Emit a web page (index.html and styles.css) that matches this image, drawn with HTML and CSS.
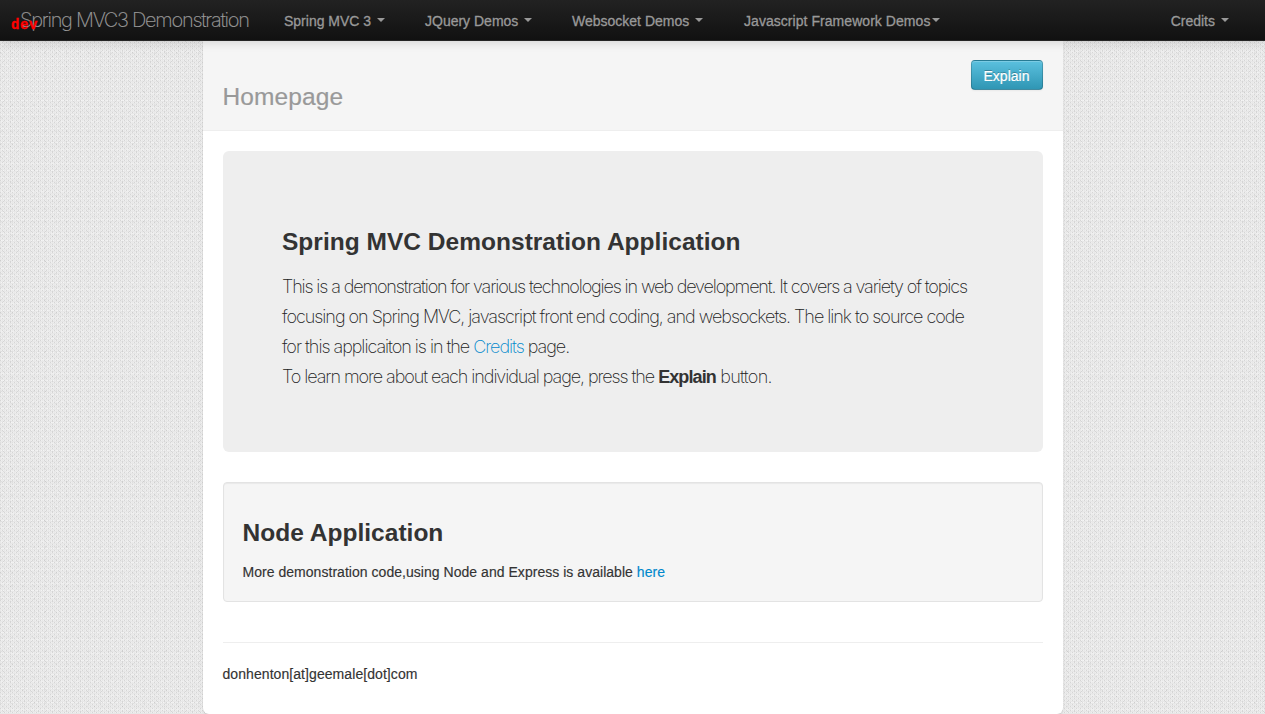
FILE: index.html
```html
<!DOCTYPE html>
<html lang="en">
<head>
<meta charset="utf-8">
<title>Spring MVC3 Demonstration</title>
<link rel="stylesheet" href="styles.css">
</head>
<body>
<nav class="navbar">
  <a class="brand">Spring MVC3 Demonstration<span class="env">dev</span></a>
  <ul class="nav">
    <li class="item item-spring"><span class="label">Spring MVC 3</span><b class="caret"></b></li>
    <li class="item item-jquery"><span class="label">JQuery Demos</span><b class="caret"></b></li>
    <li class="item item-socket"><span class="label">Websocket Demos</span><b class="caret"></b></li>
    <li class="item item-frame"><span class="label">Javascript Framework Demos</span><b class="caret"></b></li>
  </ul>
  <div class="item item-credits"><span class="label">Credits</span><b class="caret"></b></div>
</nav>
<main class="content">
  <header class="page-header">
    <h1 class="page-title">Homepage</h1>
    <button class="btn">Explain</button>
  </header>
  <section class="hero">
    <h2 class="heading">Spring MVC Demonstration Application</h2>
    <p class="lead">
      <span class="l1">This is a demonstration for various technologies in web development. It covers a variety of topics</span><br>
      <span class="l2">focusing on Spring MVC, javascript front end coding, and websockets. The link to source code</span><br>
      <span class="l3">for this applicaiton is in the <a class="link">Credits</a> page.</span><br>
      <span class="l4">To learn more about each individual page, press the <strong>Explain</strong></span><span class="l5"> button.</span>
    </p>
  </section>
  <section class="well">
    <h2 class="heading">Node Application</h2>
    <p class="text">More demonstration code,using Node and Express is available <a class="link">here</a></p>
  </section>
  <hr class="rule">
  <footer class="footer">donhenton[at]geemale[dot]com</footer>
</main>
</body>
</html>
```
FILE: styles.css
```css
* { box-sizing: border-box; }
html, body { height: 100%; }
body {
  margin: 0;
  overflow: hidden;
  font: 14px/20px "Liberation Sans", Arial, sans-serif;
  color: #333;
  background-color: #e7e7e7;
  background-image:
    conic-gradient(from 0deg at 1px 1px, transparent 270deg, rgba(0,0,0,.08) 0),
    conic-gradient(from 0deg at 1px 1px, transparent 270deg, rgba(0,0,0,.08) 0),
    conic-gradient(from 0deg at 1px 1px, transparent 270deg, rgba(255,255,255,.35) 0),
    conic-gradient(from 0deg at 1px 1px, transparent 270deg, rgba(0,0,0,.08) 0),
    conic-gradient(from 0deg at 3px 1px, transparent 270deg, rgba(255,255,255,.35) 0),
    conic-gradient(from 0deg at 2px 2px, transparent 270deg, rgba(0,0,0,.04) 0);
  background-size: 4px 4px, 4px 4px, 2px 2px, 7px 5px, 5px 7px, 11px 13px;
  background-position: 0 0, 2px 2px, 1px 0, 3px 1px, 1px 2px, 0 0;
}
.navbar {
  position: relative;
  z-index: 2;
  display: flex;
  height: 41px;
  padding: 0 36px 0 20px;
  color: #999;
  background: linear-gradient(#222, #111);
  border-bottom: 1px solid #252525;
  box-shadow: 0 1px 10px rgba(0,0,0,.15);
}
.brand {
  position: relative;
  width: 264px;
  font: 200 20px/40px Inter, sans-serif;
  letter-spacing: -1.27px;
  white-space: nowrap;
  -webkit-text-stroke: 0.15px #999;
}
.env {
  position: absolute;
  left: -9px;
  top: 16px;
  font: bold 14px/18px "Liberation Mono", monospace;
  letter-spacing: 0.6px;
  color: red;
  -webkit-text-stroke: 0.3px red;
}
.nav { display: flex; flex: 1; margin: 0; padding: 0; list-style: none; }
.item { display: flex; line-height: 42px; white-space: nowrap; -webkit-text-stroke: 0.3px #999; }
.item-spring { width: 141px; }
.item-jquery { width: 147px; }
.item-socket { width: 172px; }
.item-frame .label { letter-spacing: 0.05px; }
.caret {
  width: 0;
  height: 0;
  margin: 18px 0 0 6px;
  border-top: 4px solid #999;
  border-left: 4px solid transparent;
  border-right: 4px solid transparent;
}
.item-frame .caret { margin-left: 2px; }
.content {
  width: 860px;
  height: 673px;
  margin: 0 auto;
  padding: 0 20px;
  background: #fff;
  border-radius: 0 0 6px 6px;
  box-shadow: 0 1px 2px rgba(0,0,0,.15);
}
.page-header {
  display: flex;
  justify-content: space-between;
  height: 90px;
  margin: 0 -20px 20px;
  padding: 19px 20px;
  background: #f5f5f5;
  border-bottom: 1px solid #eee;
}
.page-title {
  margin: 17px 0 0;
  font-size: 24.5px;
  line-height: 40px;
  font-weight: normal;
  letter-spacing: 0.1px;
  color: #999;
  -webkit-text-stroke: 0.2px #999;
}
.btn {
  width: 72px;
  height: 30px;
  padding: 1px 0 0;
  font: 14px/20px "Liberation Sans", Arial, sans-serif;
  color: #fff;
  -webkit-text-stroke: 0.2px #fff;
  text-shadow: 0 -1px 0 rgba(0,0,0,.25);
  background: linear-gradient(#5bc0de, #2f96b4);
  border: 1px solid rgba(0,0,0,.18);
  border-bottom-color: rgba(0,0,0,.28);
  border-radius: 4px;
  box-shadow: inset 0 1px 0 rgba(255,255,255,.2), 0 1px 2px rgba(0,0,0,.05);
}
.hero {
  height: 301px;
  margin-bottom: 30px;
  padding: 71px 60px 0 59.5px;
  background: #eee;
  border-radius: 6px;
}
.heading { margin: 0; font-size: 24.5px; line-height: 40px; font-weight: bold; letter-spacing: 0.02px; color: #333; white-space: nowrap; }
.lead {
  margin: 10px 0 0;
  font: 200 18px/30px Inter, sans-serif;
  color: #222;
  white-space: nowrap;
}
.l1 { letter-spacing: -1.13px; }
.l2 { letter-spacing: -1.02px; }
.l3 { letter-spacing: -1.03px; }
.l4 { letter-spacing: -1.07px; }
.l5 { letter-spacing: -0.7px; }
.lead strong { font: bold 18px/20px "Liberation Sans", Arial, sans-serif; letter-spacing: -0.9px; color: #333; }
.link { color: #08c; }
.well {
  height: 120px;
  padding: 30px 19px 0;
  background: #f5f5f5;
  border: 1px solid #e3e3e3;
  border-radius: 4px;
  box-shadow: inset 0 1px 1px rgba(0,0,0,.05);
}
.text { margin: 9px 0 0; letter-spacing: 0.035px; -webkit-text-stroke: 0.15px; }
.rule { height: 1px; margin: 40px 0 21px; border: 0; background: #eee; }
.footer { letter-spacing: 0.07px; -webkit-text-stroke: 0.15px; }
```
